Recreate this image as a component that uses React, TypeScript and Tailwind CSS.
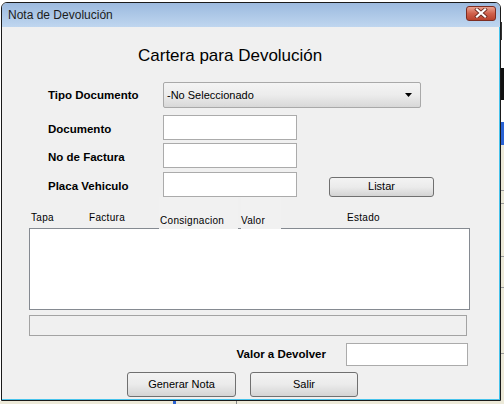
const font = { fontFamily: '"Liberation Sans", Arial, sans-serif' };

function Field({ w = 'w-[134px]' }: { w?: string }) {
  return <div className={`${w} h-[25px] bg-white border border-[#ababab]`} />;
}

function Btn({ label, w, h = 'h-[25px]' }: { label: string; w: string; h?: string }) {
  return (
    <button
      className={`${w} ${h} rounded-[3px] border border-[#707070] bg-gradient-to-b from-[#f3f3f3] via-[#ebebeb] to-[#d4d4d4] text-[11px] text-black flex items-center justify-center`}
    >
      {label}
    </button>
  );
}

export default function App() {
  return (
    <div className="w-[504px] h-[404px] bg-white overflow-hidden flex flex-col" style={font}>
      <div className="flex flex-1">
        <div className="w-[1px]" />
        <div className="w-[500px] h-[399px] mt-[2px] border border-[#1a1a1a] rounded-t-[6px] flex flex-col overflow-hidden">
          {/* title bar */}
          <div className="h-[24px] bg-gradient-to-b from-[#9cbadf] to-[#bfd6ef] flex items-center pl-[6px] pr-[4px]">
            <span className="text-[12px] text-[#1c1c1c]">Nota de Devolución</span>
            <div className="flex-1" />
            <div className="w-[30px] h-[15px] mt-[-4px] rounded-[3px] border border-[#7d2d22] bg-gradient-to-b from-[#e9a291] via-[#d0614c] to-[#b8412c] flex items-center justify-center">
              <svg width="14" height="10" viewBox="0 0 14 10">
                <path d="M3 1.5 L11 8.5 M11 1.5 L3 8.5" stroke="#6b2a20" strokeWidth="3.8" strokeLinecap="square" />
                <path d="M3 1.5 L11 8.5 M11 1.5 L3 8.5" stroke="#ffffff" strokeWidth="2.2" strokeLinecap="square" />
              </svg>
            </div>
          </div>
          {/* content */}
          <div className="flex-1 bg-[#f0f0f0] border-r border-b border-[#47c3ec] pl-[27px] flex flex-col">
            <div className="mt-[19px] ml-[109px] h-[20px] leading-[20px] text-[17px] text-black">
              Cartera para Devolución
            </div>

            <div className="mt-[16px] flex items-center">
              <div className="ml-[19px] w-[115px] pt-[1px] text-[11.5px] font-bold text-black">Tipo Documento</div>
              <div className="w-[258px] h-[26px] rounded-[2px] border border-[#a9a9a9] bg-gradient-to-b from-[#f4f4f4] via-[#ececec] to-[#d8d8d8] flex items-center pl-[3px] pr-[8px]">
                <span className="text-[11px] text-black">-No Seleccionado</span>
                <div className="flex-1" />
                <svg width="7" height="4" viewBox="0 0 7 4">
                  <path d="M0 0 H7 L3.5 4 Z" fill="#000" />
                </svg>
              </div>
            </div>

            <div className="mt-[7px] flex items-center">
              <div className="ml-[19px] w-[115px] pt-[4px] text-[11.5px] font-bold text-black">Documento</div>
              <Field />
            </div>
            <div className="mt-[3px] flex items-center">
              <div className="ml-[19px] w-[115px] pt-[5px] text-[11.5px] font-bold text-black">No de Factura</div>
              <Field />
            </div>
            <div className="mt-[4px] flex items-center">
              <div className="ml-[19px] w-[115px] pt-[5px] text-[11.5px] font-bold text-black">Placa Vehiculo</div>
              <Field />
              <div className="ml-[32px] mt-[4px]">
                <Btn label="Listar" w="w-[105px]" h="h-[20px]" />
              </div>
            </div>

            {/* table header */}
            <div className="h-[31px] flex text-[10px] tracking-[0.3px] text-black leading-[13px] relative z-10">
              <div className="ml-[2px] w-[58px] pt-[14px]">Tapa</div>
              <div className="w-[70px] pt-[14px]">Factura</div>
              <div className="w-[79px] h-[32px] pl-[1px] pt-[17px] bg-[#f1f1f1]">Consignacion</div>
              <div className="w-[3px]" />
              <div className="w-[40px] h-[32px] pt-[17px] bg-[#f1f1f1]">Valor</div>
              <div className="w-[66px]" />
              <div className="pt-[14px]">Estado</div>
            </div>
            <div className="w-[441px] h-[82px] bg-white border border-[#858a91]" />
            <div className="mt-[5px] w-[438px] h-[21px] border border-[#a3a3a3]" />

            <div className="mt-[7px] flex items-center">
              <div className="w-[297px] pt-[1px] text-right text-[11.5px] font-bold text-black">Valor a Devolver</div>
              <div className="ml-[20px] w-[122px] h-[23px] bg-white border border-[#ababab]" />
            </div>

            <div className="mt-[6px] ml-[98px] flex gap-[14px]">
              <Btn label="Generar Nota" w="w-[109px]" />
              <Btn label="Salir" w="w-[108px]" />
            </div>
          </div>
        </div>
        {/* desktop behind, right edge */}
        <div className="flex-1 flex flex-col">
          <div className="h-[22px] bg-white" />
          <div className="h-[18px] bg-white border-l border-[#333]" />
          <div className="h-[28px] bg-white" />
          <div className="h-[32px] bg-[#111]" />
          <div className="h-[22px] bg-white" />
          <div className="h-[23px] bg-[#2a62d4]" />
          <div className="flex-1 bg-[#ece9d8] flex flex-col">
            <div className="h-[45px]" />
            <div className="h-[1px] bg-[#9a9a9a]" />
            <div className="h-[12px]" />
            <div className="h-[1px] bg-[#9a9a9a]" />
            <div className="h-[52px]" />
            <div className="h-[1px] bg-[#9a9a9a]" />
            <div className="h-[30px]" />
            <div className="h-[1px] bg-[#9a9a9a]" />
            <div className="h-[65px]" />
            <div className="h-[1px] bg-[#9a9a9a]" />
          </div>
        </div>
      </div>
      <div className="h-[3px] bg-[#ece9d8] flex">
        <div className="w-[173px]" />
        <div className="w-[3px] bg-[#2a62d4]" />
        <div className="w-[60px]" />
        <div className="w-[1px] bg-[#888]" />
      </div>
    </div>
  );
}
